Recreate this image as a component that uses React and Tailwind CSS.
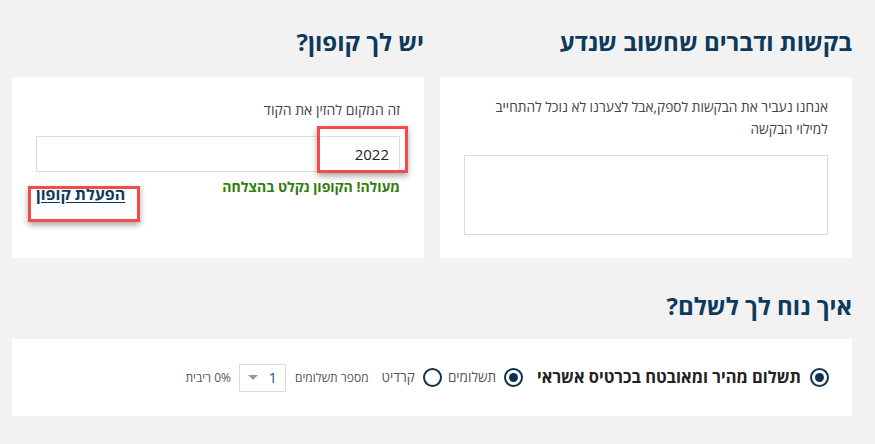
import React from "react";

function Radio({ checked }) {
  return (
    <span className="flex h-[19px] w-[19px] shrink-0 items-center justify-center rounded-full border-2 border-[#0d3350] bg-white">
      {checked && <span className="h-[9px] w-[9px] rounded-full bg-[#0d3350]" />}
    </span>
  );
}

export default function App() {
  return (
    <div
      dir="rtl"
      className="min-h-[444px] w-[875px] bg-[#f2f2f2] pl-3 pr-[23px] pt-[22px] text-[#333]"
      style={{ fontFamily: '"Open Sans", "Noto Sans", "DejaVu Sans", sans-serif' }}
    >
      <div className="flex gap-4">
        {/* Right column: requests */}
        <div className="flex w-[412px] flex-col">
          <h2 className="h-[55px] text-[24px] font-bold leading-[40px] text-[#0d3a5c]">בקשות ודברים שחשוב שנדע</h2>
          <div className="flex h-[181px] flex-col bg-white px-6 pt-[19px]">
            <p className="text-[13.7px] leading-[22px] text-[#444]">
              אנחנו נעביר את הבקשות לספק,אבל לצערנו לא נוכל להתחייב למילוי הבקשה
            </p>
            <div className="mt-[15px] h-[80px] w-full border border-[#dcdcdc] bg-white" />
          </div>
        </div>

        {/* Left column: coupon */}
        <div className="flex w-[412px] flex-col">
          <h2 className="h-[55px] text-[24px] font-bold leading-[40px] text-[#0d3a5c]">יש לך קופון?</h2>
          <div className="relative flex h-[181px] flex-col bg-white px-6 pt-[23px]">
            <p className="text-[14px] leading-[20px] text-[#444]">זה המקום להזין את הקוד</p>
            <div className="mt-[16px] flex h-[36px] w-full items-center border border-[#dcdcdc] bg-white pr-[10px] text-[15px] text-[#222]">
              2022
            </div>
            <div className="mt-[5px] flex items-start justify-between">
              <span className="text-[14px] font-bold leading-[20px] text-[#2f7d0a]">מעולה! הקופון נקלט בהצלחה</span>
              <a className="mt-[7px] text-[16px] font-bold leading-[20px] text-[#0d3a5c] underline underline-offset-2">הפעלת קופון</a>
            </div>
            <span className="pointer-events-none absolute left-[305px] top-[49px] h-[47px] w-[91px] border-[3px] border-[#f44a4a] shadow-[0_3px_6px_rgba(0,0,0,0.35)]" />
            <span className="pointer-events-none absolute left-[16px] top-[109px] h-[36px] w-[112px] border-[3px] border-[#f44a4a] shadow-[0_3px_6px_rgba(0,0,0,0.35)]" />
          </div>
        </div>
      </div>

      <h2 className="mt-[28px] h-[53px] text-[24px] font-bold leading-[40px] text-[#0d3a5c]">איך נוח לך לשלם?</h2>
      <div className="flex h-[77px] items-center bg-white pr-[23px]">
        <Radio checked />
        <span className="mr-[9px] text-[16.4px] font-bold text-[#222]">תשלום מהיר ומאובטח בכרטיס אשראי</span>
        <span className="mr-[14px]"><Radio checked /></span>
        <span className="mr-[8px] text-[13.5px] text-[#555]">תשלומים</span>
        <span className="mr-[6px]"><Radio /></span>
        <span className="mr-[8px] text-[13.5px] text-[#555]">קרדיט</span>
        <span className="mr-[13px] text-[12px] text-[#555]">מספר תשלומים</span>
        <div className="mr-[9px] flex h-[28px] w-[47px] items-center justify-between border border-[#dcdcdc] px-[8px]">
          <span className="text-[15px] text-[#1b5a8a]">1</span>
          <span className="h-0 w-0 border-x-[5px] border-t-[5px] border-x-transparent border-t-[#999]" />
        </div>
        <span className="mr-[8px] text-[12px] text-[#555]">0% ריבית</span>
      </div>
    </div>
  );
}
